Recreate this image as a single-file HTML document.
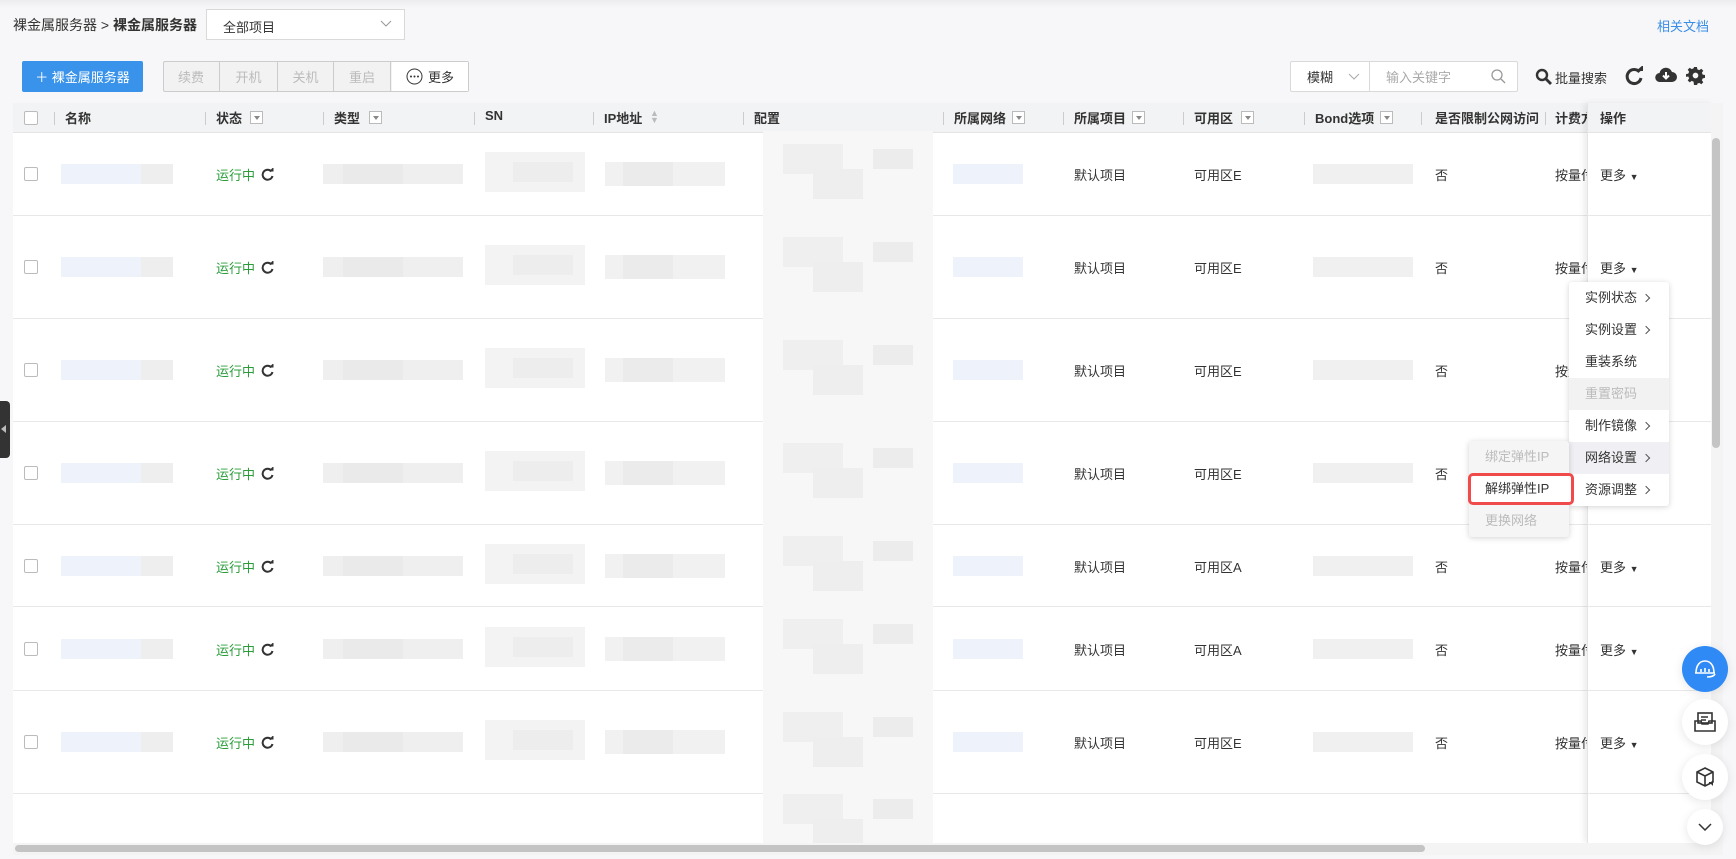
<!DOCTYPE html>
<html><head><meta charset="utf-8">
<style>
*{box-sizing:border-box;margin:0;padding:0}
body{width:1736px;height:859px;overflow:hidden;background:#f7f7f9;font-family:"Liberation Sans","Noto Sans CJK SC",sans-serif;font-size:13px;color:#333;position:relative}
.a{position:absolute}
.btn{position:absolute;top:61px;height:31px;display:flex;align-items:center;justify-content:center}
.hd{position:absolute;top:103px;height:30px;left:13px;width:1700px;background:#f2f3f5;border-bottom:1px solid #e4e4e4}
.hd span{position:absolute;top:5px;font-weight:bold;font-size:13px;color:#333}
.dv{position:absolute;top:9px;width:1px;height:13px;background:#ccc}
.flt{position:absolute;top:8px;width:13px;height:13px;border:1px solid #bbb;background:#fff}
.flt:after{content:"";position:absolute;left:3px;top:4px;border:3px solid transparent;border-top:4px solid #888}
.row{position:absolute;left:13px;width:1700px;background:#fff;border-bottom:1px solid #e8e8e8}
.cb{position:absolute;left:11px;width:14px;height:14px;border:1px solid #bbb;border-radius:2px;background:#fff}
.t{position:absolute;font-size:13px}
.bl{position:absolute;background:#ececec}
.menu{position:absolute;background:#fff;box-shadow:0 1px 6px rgba(0,0,0,.18);border-radius:3px}
.mi{height:32px;line-height:32px;padding-left:16px;font-size:13px;color:#333}
.ar{display:inline-block;width:6px;height:6px;border-right:1px solid #555;border-top:1px solid #555;transform:rotate(45deg);margin-left:6px;vertical-align:1px}
.circ{position:absolute;border-radius:50%;background:#fff;box-shadow:0 2px 10px rgba(0,0,0,.1);display:flex;align-items:center;justify-content:center}
</style></head><body>
<div class="a" style="left:0;top:0;width:1736px;height:8px;background:linear-gradient(#ececee,#f7f7f9)"></div>
<div class="a" style="left:13px;top:15px;font-size:14px">裸金属服务器 &gt; <b>裸金属服务器</b></div>
<div class="a" style="left:206px;top:9px;width:199px;height:31px;background:#fff;border:1px solid #d9d9d9;padding:7px 16px;font-size:13px">全部项目<svg class="a" style="left:173px;top:10px" width="12" height="8"><path d="M1 1l5 5 5-5" fill="none" stroke="#999"/></svg></div>
<div class="a" style="left:1657px;top:16px;color:#3a8ee6;font-size:13px">相关文档</div>

<div class="btn" style="left:22px;width:121px;background:#3a93ea;color:#fff;border-radius:2px;font-size:13px">＋ 裸金属服务器</div>
<div class="btn" style="left:163px;width:306px;border:1px solid #ccc;background:#f2f2f2;border-radius:2px"></div>
<div class="btn" style="left:163px;width:57px;color:#bbb;border-right:1px solid #ccc">续费</div>
<div class="btn" style="left:220px;width:58px;color:#bbb;border-right:1px solid #ccc">开机</div>
<div class="btn" style="left:278px;width:56px;color:#bbb;border-right:1px solid #ccc">关机</div>
<div class="btn" style="left:334px;width:57px;color:#bbb;border-right:1px solid #ccc">重启</div>
<div class="btn" style="left:392px;width:76px;top:62px;height:29px;background:#fff;color:#333"><svg width="17" height="17" style="margin-right:5px"><circle cx="8.5" cy="8.5" r="7.5" fill="none" stroke="#333"/><circle cx="5" cy="8.5" r="1" fill="#333"/><circle cx="8.5" cy="8.5" r="1" fill="#333"/><circle cx="12" cy="8.5" r="1" fill="#333"/></svg>更多</div>

<div class="btn" style="left:1290px;width:228px;border:1px solid #d9d9d9;background:#fff;border-radius:2px"></div>
<div class="btn" style="left:1290px;width:80px;border-right:1px solid #d9d9d9;justify-content:flex-start;padding-left:17px">模糊<svg style="margin-left:15px" width="12" height="8"><path d="M1 1l5 5 5-5" fill="none" stroke="#aaa"/></svg></div>
<div class="btn" style="left:1386px;color:#aaa">输入关键字</div>
<svg class="a" style="left:1491px;top:69px" width="15" height="15"><circle cx="6" cy="6" r="5" fill="none" stroke="#999" stroke-width="1.3"/><path d="M10 10l4 4" stroke="#999" stroke-width="1.3"/></svg>
<svg class="a" style="left:1535px;top:68px" width="17" height="17"><circle cx="7" cy="7" r="5" fill="none" stroke="#333" stroke-width="2.4"/><path d="M11 11l5 5" stroke="#333" stroke-width="2.8"/></svg>
<div class="a" style="left:1555px;top:68px;font-size:13px">批量搜索</div>
<svg class="a" style="left:1624px;top:66px" width="20" height="20"><path d="M15.5 6A7 7 0 1 0 17 12" fill="none" stroke="#333" stroke-width="3"/><path d="M12 5h7V-1z" fill="#333"/></svg>
<svg class="a" style="left:1655px;top:66px" width="22" height="18"><path d="M5 16a4.5 4.5 0 0 1-.5-9A6.5 6.5 0 0 1 17 6a5 5 0 0 1 0 10z" fill="#333"/><path d="M11 6v6M8 9.5l3 3 3-3" stroke="#fff" stroke-width="2" fill="none"/></svg>
<svg class="a" style="left:1686px;top:66px" width="19" height="19" viewBox="0 0 20 20"><path fill="#333" d="M8.5 1h3l.5 2.5 2 .9 2.1-1.5 2.1 2.1-1.5 2.1.9 2 2.4.4v3l-2.4.5-.9 2 1.5 2.1-2.1 2.1-2.1-1.5-2 .9-.5 2.4h-3L8 16.6l-2-.9-2.1 1.5-2.1-2.1 1.5-2.1-.9-2L0 11.5v-3L2.4 8l.9-2-1.5-2.1 2.1-2.1L6 3.3l2-.9z"/><circle cx="10" cy="10" r="3" fill="#f7f7f9"/></svg>

<div class="hd">
<div class="cb" style="top:8px"></div>
<div class="dv" style="left:41px"></div><span style="left:52px">名称</span>
<div class="dv" style="left:192px"></div><span style="left:203px">状态</span><div class="flt" style="left:237px"></div>
<div class="dv" style="left:310px"></div><span style="left:321px">类型</span><div class="flt" style="left:356px"></div>
<div class="dv" style="left:461px"></div><span style="left:472px">SN</span>
<div class="dv" style="left:580px"></div><span style="left:591px">IP地址</span><span style="left:637px;color:#bbb;font-size:9px;top:7px;line-height:7px">▲<br>▼</span>
<div class="dv" style="left:730px"></div><span style="left:741px">配置</span>
<div class="dv" style="left:930px"></div><span style="left:941px">所属网络</span><div class="flt" style="left:999px"></div>
<div class="dv" style="left:1050px"></div><span style="left:1061px">所属项目</span><div class="flt" style="left:1119px"></div>
<div class="dv" style="left:1170px"></div><span style="left:1181px">可用区</span><div class="flt" style="left:1228px"></div>
<div class="dv" style="left:1291px"></div><span style="left:1302px">Bond选项</span><div class="flt" style="left:1367px"></div>
<div class="dv" style="left:1408px"></div><span style="left:1422px">是否限制公网访问</span>
<div class="dv" style="left:1532px"></div><span style="left:1542px">计费方</span>
</div>
<div id="rows"></div>
<div class="a" style="left:1587px;top:103px;width:126px;height:740px;background:#fff;box-shadow:-3px 0 6px rgba(0,0,0,.08);border-left:1px solid #e4e4e4"></div>
<div class="a" style="left:1588px;top:103px;width:125px;height:30px;background:#f2f3f5;border-bottom:1px solid #e4e4e4"><span style="position:absolute;left:12px;top:5px;font-weight:bold">操作</span></div>
<div id="ops"></div>
<div class="a" style="left:1711px;top:103px;width:12px;height:745px;background:#f4f4f4"></div>
<div class="a" style="left:1712px;top:138px;width:8px;height:310px;background:#c4c4c4;border-radius:4px"></div>
<div class="a" style="left:13px;top:843px;width:1710px;height:12px;background:#f4f4f4"></div>
<div class="a" style="left:15px;top:845px;width:1410px;height:7px;background:#c4c4c4;border-radius:4px"></div>
<div class="a" style="left:0;top:401px;width:10px;height:57px;background:#333;border-radius:0 4px 4px 0"><div class="a" style="left:1px;top:24px;border:4px solid transparent;border-right:5px solid #bbb;border-left:0"></div></div>

<div class="menu" style="left:1569px;top:282px;width:100px;padding:0">
<div class="mi">实例状态<i class="ar"></i></div><div class="mi">实例设置<i class="ar"></i></div><div class="mi">重装系统</div>
<div class="mi" style="background:#f2f2f2;color:#bbb">重置密码</div><div class="mi">制作镜像<i class="ar"></i></div>
<div class="mi" style="background:#f0f0f4">网络设置<i class="ar"></i></div><div class="mi">资源调整<i class="ar"></i></div>
</div>
<div class="menu" style="left:1469px;top:441px;width:100px;background:#f5f5f5">
<div class="mi" style="color:#bbb">绑定弹性IP</div>
<div class="mi" style="background:#fff;border:3px solid #f04a4a;border-radius:5px;margin:0 -5px 0 -1px;padding-left:14px;line-height:26px">解绑弹性IP</div>
<div class="mi" style="color:#bbb">更换网络</div>
</div>

<div class="circ" style="left:1682px;top:646px;width:46px;height:46px;background:#2f8af5"><svg width="24" height="20"><path d="M3 14c0-8 4-12 9-12s9 4 9 12" fill="none" stroke="#fff" stroke-width="1.6"/><path d="M2 14h20M14 18c4 0 7-1 8-3" fill="none" stroke="#fff" stroke-width="1.6"/><path d="M8 10v3M12 9v4M16 10v3" stroke="#fff" stroke-width="1.6"/></svg></div>
<div class="circ" style="left:1682px;top:699px;width:46px;height:46px"><svg width="22" height="20"><rect x="4" y="1" width="14" height="10" fill="none" stroke="#333" stroke-width="1.6"/><path d="M7 5h7M7 8h5" stroke="#333" stroke-width="1.4"/><path d="M1 9h6l1 3h6l1-3h6v10H1z" fill="none" stroke="#333" stroke-width="1.6"/></svg></div>
<div class="circ" style="left:1682px;top:754px;width:46px;height:46px"><svg width="22" height="22"><path d="M11 2l8 4v10l-8 4-8-4V6z M3 6l8 4 8-4 M11 10v10" fill="none" stroke="#333" stroke-width="1.6"/><path d="M15 16h2l2-2v6l-2-2h-2z" fill="#333"/></svg></div>
<div class="circ" style="left:1687px;top:809px;width:36px;height:36px"><svg width="14" height="8"><path d="M1 1l6 6 6-6" fill="none" stroke="#333" stroke-width="1.5"/></svg></div>

<script>
var tops=[133,216,319,422,525,607,691,794],zones=['E','E','E','E','A','A','E'];
var h='',o='';
function b(x,y,w,hh,c){return '<div class="bl" style="left:'+x+'px;top:'+y+'px;width:'+w+'px;height:'+hh+'px;background:'+(c||'#ececec')+'"></div>';}
for(var i=0;i<8;i++){var t=tops[i],ht=(tops[i+1]||855)-t,c=(ht/2)|0;
h+='<div class="row" style="top:'+t+'px;height:'+ht+'px">';
h+=b(750,-2,170,ht+2,'#f7f7f7')+b(770,c-30,60,30,'#efefef')+b(800,c-5,50,30,'#eeeeee')+b(860,c-25,40,20,'#ececec');
if(i<7){
h+='<div class="cb" style="top:'+(c-7)+'px"></div>';
h+=b(48,c-10,80,20,'#edf2fb')+b(128,c-10,32,20,'#eeeeee');
h+='<div class="t" style="left:203px;top:'+(c-9)+'px;color:#2a9c3a">运行中</div><svg class="a" style="left:248px;top:'+(c-6)+'px" width="13" height="13"><path d="M10.5 3.5A5 5 0 1 0 11.5 8" fill="none" stroke="#333" stroke-width="2"/><path d="M8 3.5h4.5V-1z" fill="#333"/></svg>';
h+=b(310,c-10,140,20,'#efefef')+b(330,c-10,60,20,'#eaeaea')+b(472,c-22,100,40,'#f3f3f3')+b(500,c-12,60,20,'#ededed')+b(592,c-12,120,24,'#f1f1f1')+b(610,c-12,50,24,'#ebebeb')+b(940,c-10,70,20,'#edf2fb');
h+='<div class="t" style="left:1061px;top:'+(c-9)+'px">默认项目</div><div class="t" style="left:1181px;top:'+(c-9)+'px">可用区'+zones[i]+'</div>';
h+=b(1300,c-10,100,20,'#f0f0f0')+'<div class="t" style="left:1422px;top:'+(c-9)+'px">否</div>';
if(i!=3)h+='<div class="t" style="left:1542px;top:'+(c-9)+'px">按量付</div>';
o+='<div class="a" style="left:1588px;top:'+(t+ht-1)+'px;width:123px;height:1px;background:#e8e8e8"></div>';
if(i!=2&&i!=3)o+='<div class="a" style="left:1600px;top:'+(t+c-9)+'px">更多 <span style="font-size:9px">▼</span></div>';
}
h+='</div>';}
document.getElementById('rows').innerHTML=h;document.getElementById('ops').innerHTML=o;
</script>
</body></html>
